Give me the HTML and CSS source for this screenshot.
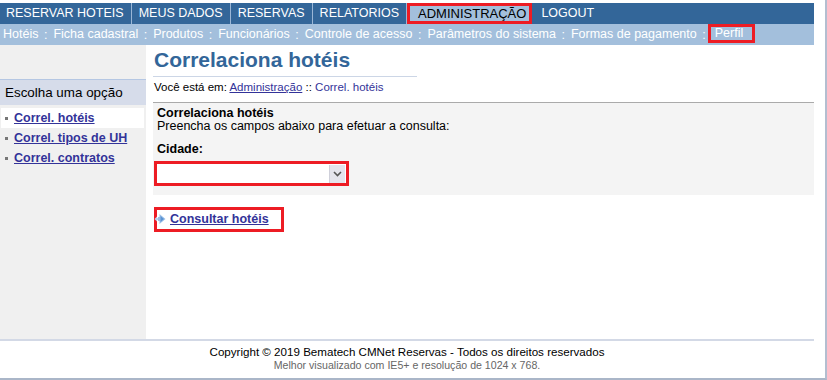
FILE: index.html
```html
<html lang="pt-BR">
  <head>
    <meta charset="UTF-8" />
    <meta name="viewport" content="width=device-width, initial-scale=1.0" />
    <title>CMNet Reservas - Correlaciona hotéis</title>
    <link rel="stylesheet" href="styles.css">
  </head>
  <body>
    <div class="window">
      <div class="page">
        <!-- menu principal -->
        <div class="topmenu">
          <a class="top" href="#">RESERVAR HOTEIS</a>
          <a class="top" href="#">MEUS DADOS</a>
          <a class="top" href="#">RESERVAS</a>
          <a class="top" href="#">RELATORIOS</a>
          <a class="top active" href="#">ADMINISTRAÇÃO</a>
          <a class="top last" href="#">LOGOUT</a>
        </div>
        <!-- submenu da administracao -->
        <div class="submenu">
          <a href="#">Hotéis</a><span class="sep">:</span>
          <a href="#">Ficha cadastral</a><span class="sep">:</span>
          <a href="#">Produtos</a><span class="sep">:</span>
          <a href="#">Funcionários</a><span class="sep">:</span>
          <a href="#">Controle de acesso</a><span class="sep">:</span>
          <a href="#">Parâmetros do sistema</a><span class="sep">:</span>
          <a href="#">Formas de pagamento</a><span class="sep">:</span>
          <a class="mark" href="#">Perfil</a>
        </div>

        <div class="main">
          <div class="sidebar">
            <div class="side-title">Escolha uma opção</div>
            <ul class="side-list">
              <li class="current"><a href="#">Correl. hotéis</a></li>
              <li><a href="#">Correl. tipos de UH</a></li>
              <li><a href="#">Correl. contratos</a></li>
            </ul>
          </div>

          <div class="content">
            <div class="title">Correlaciona hotéis</div>
            <div class="crumb">Você está em: <a href="#">Administração</a> :: <span class="here">Correl. hotéis</span></div>

            <div class="form-box">
              <div class="form-head">Correlaciona hotéis</div>
              <div class="form-text">Preencha os campos abaixo para efetuar a consulta:</div>
              <div class="label">Cidade:</div>
              <div class="mark-box">
                <div class="select">
                  <div class="select-value"></div>
                  <div class="select-btn">
                    <svg width="9" height="6" viewBox="0 0 9 6"><path d="M1 1 L4.5 4.5 L8 1" fill="none" stroke="#555" stroke-width="1.6"/></svg>
                  </div>
                </div>
              </div>
            </div>

            <div class="mark-link">
              <svg class="go-icon" width="13" height="12" viewBox="0 0 13 12">
                <path d="M0.5 6 L3 3.5 L3 5 L5 5 L5 7 L3 7 L3 8.5 Z" fill="#b9d2ee"/>
                <path d="M5.5 1 L11.5 6 L5.5 11 L5.5 8 L4 8 L4 4 L5.5 4 Z" fill="#9cc0e8"/>
                <path d="M6.5 3 L10 6 L6.5 9 Z" fill="#5b93d3"/>
              </svg>
              <a class="go" href="#">Consultar hotéis</a>
            </div>
          </div>
        </div>

        <div class="footer">
          <div class="copy">Copyright © 2019 Bematech CMNet Reservas - Todos os direitos reservados</div>
          <div class="hint">Melhor visualizado com IE5+ e resolução de 1024 x 768.</div>
        </div>
      </div>
    </div>
  </body>
</html>
```

FILE: styles.css
```css
* {
  margin: 0;
  padding: 0;
}
body {
  font-family: "Liberation Sans", Arial, sans-serif;
  font-size: 12.5px;
  color: #000000;
  background: #ffffff;
}
.window {
  width: 825px;
  height: 378px;
  border-right: 2px solid #b3bed0;
  border-bottom: 2px solid #aab6c8;
}
.page {
  width: 814px;
  padding-top: 3px;
}

/* menu principal */
.topmenu {
  display: flex;
  height: 21px;
  background: #336699;
}
.top {
  color: #ffffff;
  text-decoration: none;
  font-size: 12.5px;
  line-height: 21px;
  padding: 0 7px;
  border-right: 1px solid #9ab6d6;
}
.top:first-child {
  padding-left: 6px;
}
.top.active {
  background: #a3bfdc;
  color: #000000;
  font-size: 13px;
  padding: 0 3px 0 8px;
  line-height: 15px;
  border: 3px solid #ed1c24;
}
.top.last {
  border-right: none;
  padding-left: 9px;
}

/* submenu */
.submenu {
  display: flex;
  align-items: center;
  height: 21px;
  background: #a3bfdc;
  padding-left: 3px;
}
.submenu a {
  color: #ffffff;
  text-decoration: none;
  line-height: 19px;
}
.submenu .sep {
  color: #ffffff;
  padding: 0 6px 0 5.5px;
}
.submenu .mark {
  border: 3px solid #ed1c24;
  line-height: 13px;
  padding: 0 9px 0 4px;
  margin-left: -4px;
  align-self: flex-start;
}

.main {
  display: flex;
  height: 294px;
}

/* menu lateral */
.sidebar {
  width: 146px;
  background: #f0f0f0;
  padding-top: 34px;
}
.side-title {
  border-top: 1px solid #b5c7e3;
  background: #d6dcea;
  height: 25px;
  line-height: 25px;
  padding-left: 5px;
  font-size: 13.4px;
}
.side-list {
  list-style: none;
  margin-top: 3px;
}
.side-list li {
  height: 20px;
  line-height: 20px;
  padding-left: 13px;
  margin: 0 2px 0 1px;
  position: relative;
}
.side-list li::before {
  content: "";
  position: absolute;
  left: 4px;
  top: 9px;
  width: 3px;
  height: 3px;
  background: #777777;
}
.side-list li.current {
  background: #ffffff;
}
.side-list a {
  color: #333399;
  font-weight: bold;
}

/* conteudo */
.content {
  flex: 1;
  padding-left: 7px;
}
.title {
  width: 263px;
  font-size: 21px;
  font-weight: bold;
  color: #336699;
  line-height: 24px;
  padding-top: 3px;
  padding-bottom: 4px;
  padding-left: 1px;
  border-bottom: 1px solid #ccd6e6;
}
.crumb {
  font-size: 11.5px;
  line-height: 14px;
  padding-top: 3px;
  padding-left: 1px;
}
.crumb a {
  color: #333399;
}
.crumb .here {
  color: #333399;
}
.form-box {
  margin-top: 8px;
  border-top: 1px solid #aaaaaa;
  background: #f4f4f4;
  padding: 4px 0 9px 4px;
}
.form-head {
  font-weight: bold;
  line-height: 13px;
}
.form-text {
  line-height: 13px;
}
.label {
  font-weight: bold;
  line-height: 13px;
  margin-top: 10px;
}
.mark-box {
  width: 189px;
  margin-top: 5px;
  margin-left: -3px;
  border: 3px solid #ed1c24;
}
.select {
  display: flex;
  height: 19px;
  background: #ffffff;
}
.select-value {
  flex: 1;
}
.select-btn {
  width: 15px;
  margin: 1px 1px 0 0;
  background: #e4e4ec;
  border-left: 1px solid #cfd0da;
  display: flex;
  align-items: center;
  justify-content: center;
}
.mark-link {
  display: inline-flex;
  align-items: center;
  margin-top: 12px;
  margin-left: 1px;
  border: 3px solid #ed1c24;
  height: 17px;
  padding: 0 12px 2px 0;
}
.go-icon {
  margin-left: -3px;
  margin-right: 3px;
}
.go {
  color: #333399;
  font-weight: bold;
}

/* rodape */
.footer {
  border-top: 2px solid #d3d9e6;
  text-align: center;
  padding-top: 4px;
}
.copy {
  font-size: 11.6px;
  line-height: 14px;
}
.hint {
  font-size: 10.6px;
  line-height: 13px;
  color: #666666;
}
```
